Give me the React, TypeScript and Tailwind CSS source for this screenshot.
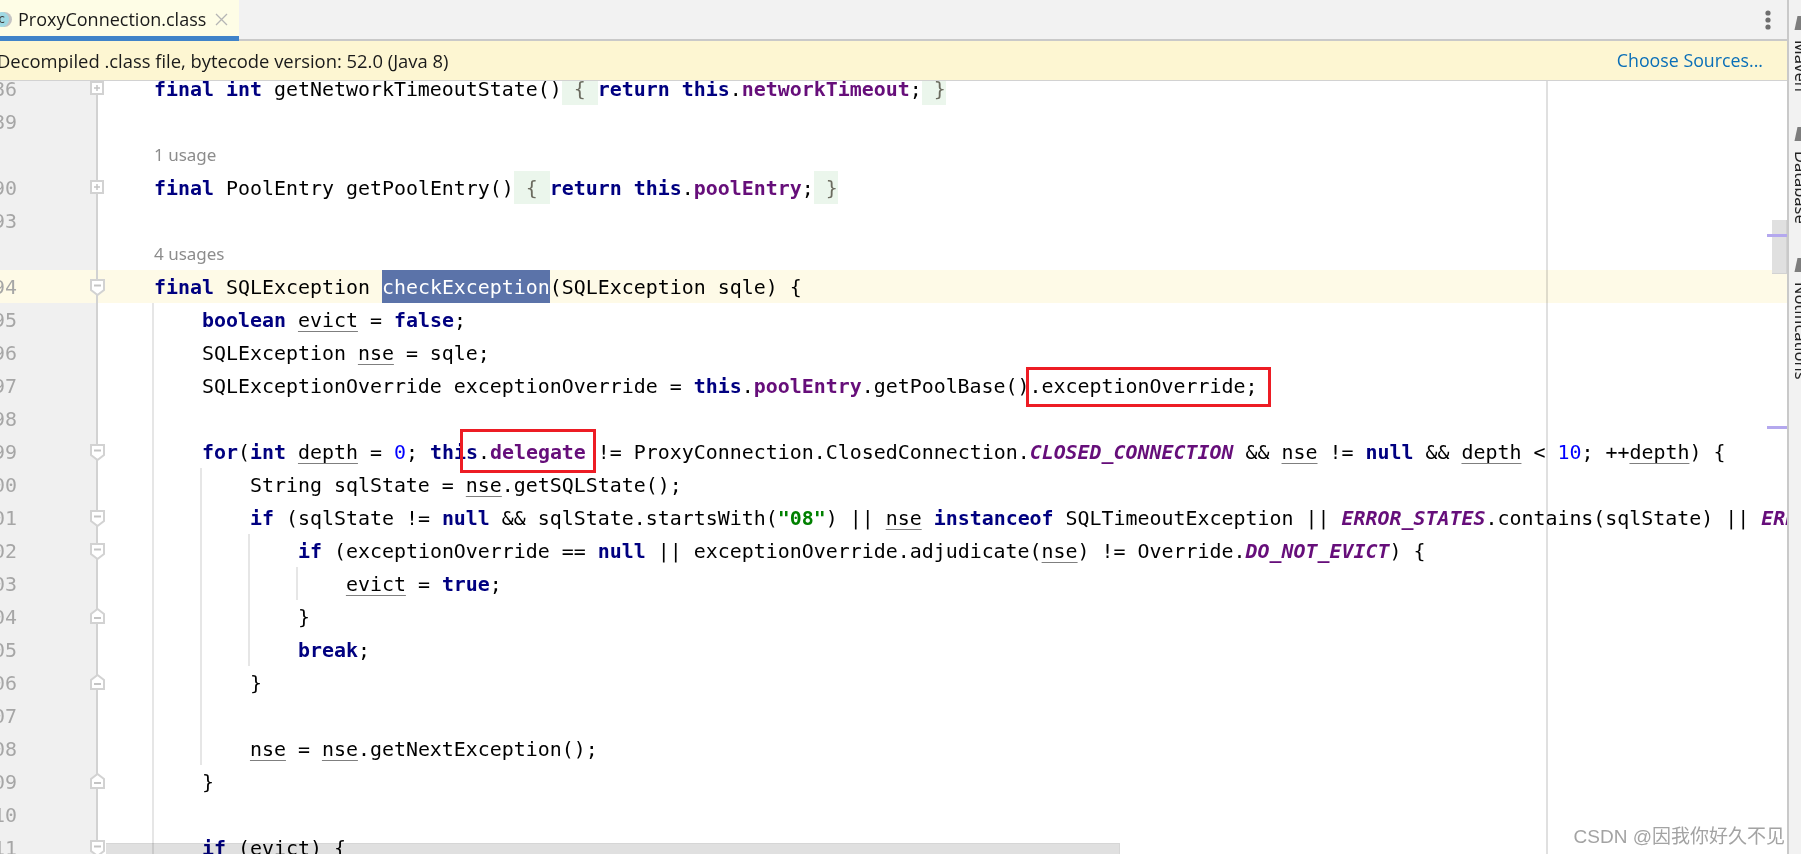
import React from 'react';

const K = ({ children }: { children: React.ReactNode }) => <span className="font-bold text-[#000080]">{children}</span>;
const F = ({ children }: { children: React.ReactNode }) => <span className="font-bold text-[#660e7a]">{children}</span>;
const S = ({ children }: { children: React.ReactNode }) => <span className="font-bold italic text-[#660e7a]">{children}</span>;
const U = ({ children }: { children: React.ReactNode }) => (
  <span className="underline decoration-[#7f7f7f] decoration-1 underline-offset-[4px]">{children}</span>
);
const Fold = ({ children }: { children: React.ReactNode }) => (
  <span className="inline-block h-[33px] bg-[#ebf6ec] align-top text-[#6b6b5f]">{children}</span>
);

type Marker = 'plus' | 'start' | 'end';

const FoldMarker = ({ type }: { type: Marker }) => (
  <svg className="absolute left-[89px] top-[8px] z-10 h-[18px] w-[17px]" viewBox="0 0 17 18" fill="none">
    {type === 'plus' && <rect x="2" y="2" width="12" height="12" fill="#fff" stroke="#d2d2d2" strokeWidth="2" />}
    {type === 'start' && <path d="M2 2H15V12L8.5 17L2 12Z" fill="#fff" stroke="#d2d2d2" strokeWidth="2" />}
    {type === 'end' && <path d="M2 15H15V6L8.5 1L2 6Z" fill="#fff" stroke="#d2d2d2" strokeWidth="2" />}
    {type === 'plus' && <path d="M5 8H11M8 5V11" stroke="#c4c4c4" strokeWidth="1.5" />}
    {type === 'start' && <path d="M5 7.5H12" stroke="#c4c4c4" strokeWidth="2" />}
    {type === 'end' && <path d="M5 10H12" stroke="#c4c4c4" strokeWidth="2" />}
  </svg>
);

const guideClass: Record<number, string> = {
  152: 'left-[152px]',
  200: 'left-[200px]',
  248: 'left-[248px]',
  296: 'left-[296px]',
};

interface RowProps {
  num?: string;
  marker?: Marker;
  guides?: number[];
  active?: boolean;
  children?: React.ReactNode;
}

const Row = ({ num, marker, guides = [], active, children }: RowProps) => (
  <div className={`relative flex h-[33px] shrink-0 ${active ? 'bg-[#fefae7]' : ''}`}>
    <div className={`relative w-[98px] shrink-0 border-r-2 border-[#d2d2d2] ${active ? '' : 'bg-[#f0f0f0]'}`}>
      <div className="absolute right-[79px] text-[19.93px] leading-[35px] text-[#a6a6a6]">{num}</div>
      {marker && <FoldMarker type={marker} />}
    </div>
    {guides.map((g) => (
      <div key={g} className={`absolute top-0 bottom-0 w-[2px] bg-[#e6e6e6] ${guideClass[g]}`} />
    ))}
    <div className="pl-[56px] text-[19.93px] leading-[35px] whitespace-pre text-[#000000]">{children}</div>
  </div>
);

const Usage = ({ children }: { children: string }) => (
  <Row>
    <span className="inline-block align-top font-['Noto_Sans',sans-serif] text-[17px] leading-[33px] text-[#8c8c8c]">{children}</span>
  </Row>
);

const RailItem = ({ label, className }: { label: string; className: string }) => (
  <div className={`flex flex-col items-start ${className}`}>
    <div className="mb-[10px] ml-[7px] h-[14px] w-[10px] skew-x-[-12deg] bg-[#7d7d7d]" />
    <span className="ml-[4px] font-['Noto_Sans',sans-serif] text-[16.4px] leading-[17px] text-[#222] [writing-mode:vertical-rl]">
      {label}
    </span>
  </div>
);

export default function App() {
  return (
    <div className="flex h-[854px] w-[1801px] overflow-hidden bg-white font-['DejaVu_Sans_Mono',monospace]">
      <div className="relative flex min-w-0 flex-1 flex-col border-r-2 border-[#c9c9c9]">
        {/* Tabs */}
        <div className="flex h-[41px] shrink-0 bg-[#f2f2f2]">
          <div className="flex h-[41px] w-[239px] shrink-0 items-center border-b-[5px] border-[#4083c9] bg-[#fefde6] pt-[2px]">
            <div className="-ml-[6px] flex h-[15px] w-[15px] shrink-0 items-center justify-center rounded-full bg-[#9fd9e3] text-[12px] leading-none text-[#3a3a3a] shadow-[3px_0_0_#c4c4c4]">
              c
            </div>
            <span className="ml-[9px] font-['Open_Sans',sans-serif] text-[18px] text-[#1a1a1a]">ProxyConnection.class</span>
            <svg className="ml-[9px] h-[13px] w-[13px]" viewBox="0 0 13 13" stroke="#b5b5b5" strokeWidth="1.3">
              <path d="M1 1L12 12M12 1L1 12" />
            </svg>
          </div>
          <div className="flex flex-1 items-start justify-end border-b-2 border-[#c9c9c9] pr-[16px] pt-[10px]">
            <svg className="h-[20px] w-[6px]" viewBox="0 0 6 20" fill="#6e6e6e">
              <circle cx="3" cy="3" r="2.6" />
              <circle cx="3" cy="10" r="2.6" />
              <circle cx="3" cy="17" r="2.6" />
            </svg>
          </div>
        </div>

        {/* Decompiled notice */}
        <div className="z-20 flex h-[40px] shrink-0 items-center justify-between border-b border-[#d2d2d2] bg-[#fdf6d2] pr-[24px] font-['Open_Sans',sans-serif]">
          <span className="-ml-[3px] text-[18.4px] text-[#1a1a1a]">Decompiled .class file, bytecode version: 52.0 (Java 8)</span>
          <span className="text-[17.8px] text-[#0a6fb8]">Choose Sources...</span>
        </div>

        {/* Editor */}
        <div className="relative min-h-0 flex-1 overflow-hidden">
          <div className="-mt-[9px] flex flex-col">
            <Row num="186" marker="plus"><K>final int</K> getNetworkTimeoutState()<Fold> {'{'} </Fold><K>return this</K>.<F>networkTimeout</F>;<Fold> {'}'}</Fold></Row>
            <Row num="189" />
            <Usage>1 usage</Usage>
            <Row num="190" marker="plus"><K>final</K> PoolEntry getPoolEntry()<Fold> {'{'} </Fold><K>return this</K>.<F>poolEntry</F>;<Fold> {'}'}</Fold></Row>
            <Row num="193" />
            <Usage>4 usages</Usage>
            <Row num="194" marker="start" active><K>final</K> SQLException <span className="bg-[#5b73a9] inline-block h-[33px] align-top text-white">checkException</span>(SQLException sqle) {'{'}</Row>
            <Row num="195" guides={[152]}>    <K>boolean</K> <U>evict</U> = <K>false</K>;</Row>
            <Row num="196" guides={[152]}>    SQLException <U>nse</U> = sqle;</Row>
            <Row num="197" guides={[152]}>    SQLExceptionOverride exceptionOverride = <K>this</K>.<F>poolEntry</F>.getPoolBase().exceptionOverride;</Row>
            <Row num="198" guides={[152]} />
            <Row num="199" marker="start" guides={[152]}>    <K>for</K>(<K>int</K> <U>depth</U> = <span className="text-[#0000ff]">0</span>; <K>this</K>.<F>delegate</F> != ProxyConnection.ClosedConnection.<S>CLOSED_CONNECTION</S> &amp;&amp; <U>nse</U> != <K>null</K> &amp;&amp; <U>depth</U> &lt; <span className="text-[#0000ff]">10</span>; ++<U>depth</U>) {'{'}</Row>
            <Row num="200" guides={[152, 200]}>        String sqlState = <U>nse</U>.getSQLState();</Row>
            <Row num="201" marker="start" guides={[152, 200]}>        <K>if</K> (sqlState != <K>null</K> &amp;&amp; sqlState.startsWith(<span className="font-bold text-[#008000]">"08"</span>) || <U>nse</U> <K>instanceof</K> SQLTimeoutException || <S>ERROR_STATES</S>.contains(sqlState) || <S>ERROR_CODES</S>.contains(<U>nse</U>.getErrorCode())) {'{'}</Row>
            <Row num="202" marker="start" guides={[152, 200, 248]}>            <K>if</K> (exceptionOverride == <K>null</K> || exceptionOverride.adjudicate(<U>nse</U>) != Override.<S>DO_NOT_EVICT</S>) {'{'}</Row>
            <Row num="203" guides={[152, 200, 248, 296]}>                <U>evict</U> = <K>true</K>;</Row>
            <Row num="204" marker="end" guides={[152, 200, 248]}>            {'}'}</Row>
            <Row num="205" guides={[152, 200, 248]}>            <K>break</K>;</Row>
            <Row num="206" marker="end" guides={[152, 200]}>        {'}'}</Row>
            <Row num="207" guides={[152, 200]} />
            <Row num="208" guides={[152, 200]}>        <U>nse</U> = <U>nse</U>.getNextException();</Row>
            <Row num="209" marker="end" guides={[152]}>    {'}'}</Row>
            <Row num="210" guides={[152]} />
            <Row num="211" marker="start" guides={[152]}>    <K>if</K> (<U>evict</U>) {'{'}</Row>
          </div>

          {/* Right margin, scrollbars and stripe marks sit over the text */}
          <div className="absolute top-0 bottom-0 left-[1546px] w-[2px] bg-[#e0e0e0] mix-blend-multiply" />
          <div className="absolute top-[139px] right-0 h-[54px] w-[15px] border-r border-b border-[#d2d2d2] bg-[#e0e0e0]" />
          <div className="absolute top-[153px] right-0 h-[3px] w-[20px] bg-[#b4a8ee]" />
          <div className="absolute top-[345px] right-0 h-[3px] w-[20px] bg-[#b4a8ee]" />
          <div className="absolute bottom-0 left-[106px] h-[11px] w-[1014px] border-t border-r border-[#d6d6d6] bg-[#e0e0e0] mix-blend-multiply" />

          {/* Red annotation boxes drawn on the screenshot */}
          <div className="absolute top-[286px] left-[1026px] h-[40px] w-[245px] border-[3px] border-[#ed1c24]" />
          <div className="absolute top-[348px] left-[460px] h-[44px] w-[136px] border-[3px] border-[#ed1c24]" />
        </div>

        <div className="absolute right-[2px] bottom-[5px] z-20 font-['Liberation_Sans','Noto_Sans_CJK_SC',sans-serif] text-[19px] leading-[24px] whitespace-nowrap text-[#a3a3a3]">
          CSDN @因我你好久不见
        </div>
      </div>

      {/* Tool window rail, cropped at the screenshot edge */}
      <div className="relative w-[12px] shrink-0 overflow-hidden bg-[#f2f2f2] pt-[16px]">
        <RailItem label="Maven" className="w-[30px]" />
        <RailItem label="Database" className="mt-[35px] w-[30px]" />
        <RailItem label="Notifications" className="mt-[35px] w-[30px]" />
      </div>
    </div>
  );
}
